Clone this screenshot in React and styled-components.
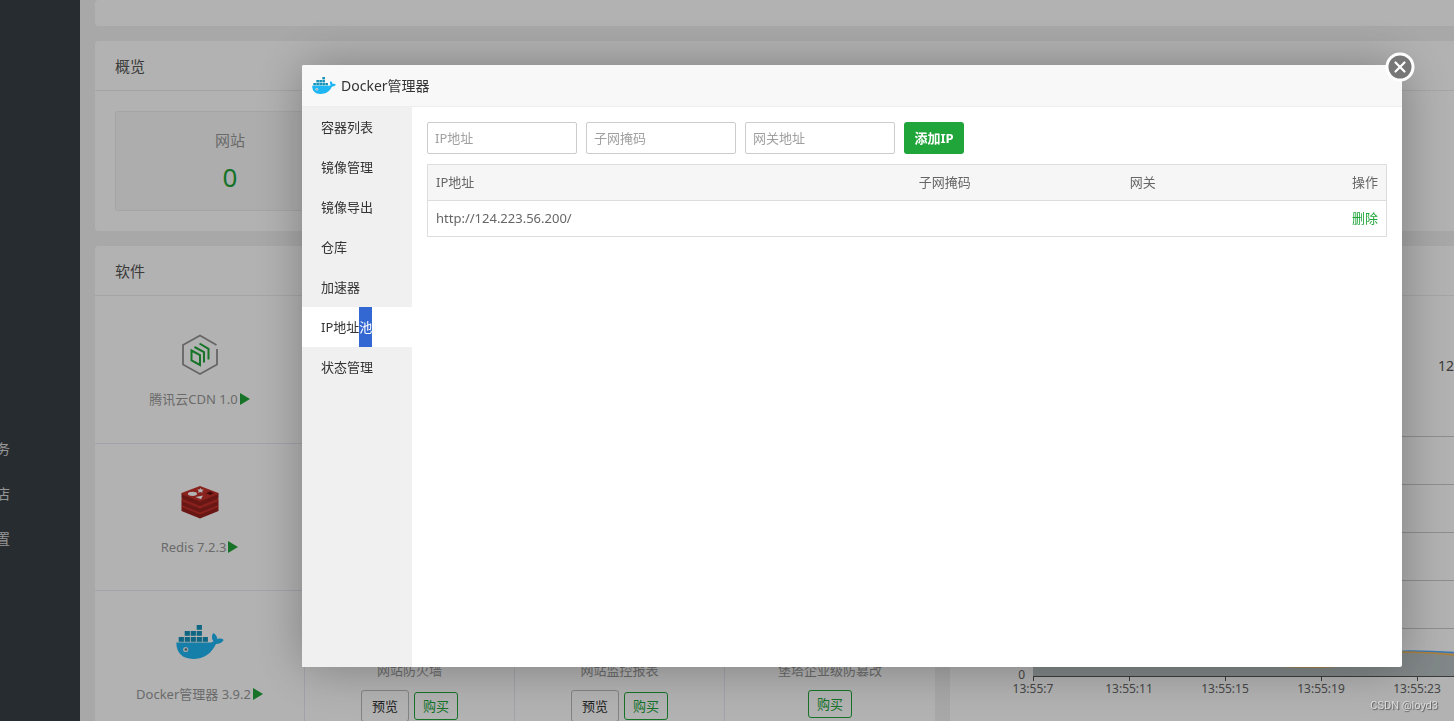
import React from "react";
import styled, { createGlobalStyle, css } from "styled-components";

const GlobalStyle = createGlobalStyle`
  *, *::before, *::after { box-sizing: border-box; }
  body {
    margin: 0;
    overflow: hidden;
    background: #f1f1f1;
    color: #666;
    font-family: "Noto Sans", "Noto Sans CJK SC", sans-serif;
    font-size: 13px;
    line-height: 20px;
  }
  button, input { font: inherit; }
  a { text-decoration: none; }
`;

const Page = styled.div`
  display: flex;
  height: 100vh;
  overflow: hidden;
`;

/* ---------- left navigation ---------- */

const SideNav = styled.nav`
  flex: none;
  width: 80px;
  overflow: hidden;
  background: #383f45;
`;

const NavList = styled.ul`
  width: 180px;
  margin: 426px 0 0 -100px;
  padding: 0;
  list-style: none;
`;

const NavItem = styled.li`
  height: 45px;
  padding-left: 54px;
  line-height: 45px;
  font-size: 14px;
`;

const NavLink = styled.a`
  color: #d6d6d6;
`;

const NAV = ["计划任务", "软件商店", "面板设置"];

/* ---------- dashboard ---------- */

const Main = styled.main`
  flex: 1;
  min-width: 0;
  display: flex;
  flex-direction: column;
  gap: 15px;
  padding-left: 15px;
`;

const Card = styled.section`
  flex: none;
  min-width: 0;
  overflow: hidden;
  background: #fff;
  border-radius: 4px 0 0 4px;
`;

const TopCard = styled(Card)`
  height: 26px;
`;

const SoftCard = styled(Card)`
  border-radius: 4px;
`;

const CardTitle = styled.h2`
  height: 50px;
  margin: 0;
  padding-left: 20px;
  border-bottom: 1px solid #ededed;
  color: #555;
  font-size: 15px;
  font-weight: 400;
  line-height: 50px;
`;

const Stats = styled.div`
  display: grid;
  grid-template-columns: repeat(auto-fill, 230px);
  padding: 20px;
`;

const StatBox = styled.div`
  height: 100px;
  padding-top: 16px;
  border: 1px solid #ededed;
  border-radius: 2px;
  background: #f8f8f8;
  text-align: center;
`;

const StatName = styled.div`
  color: #999;
  font-size: 15px;
  line-height: 24px;
`;

const StatValue = styled.a`
  display: block;
  color: #20a53a;
  font-size: 26px;
  line-height: 50px;
`;

const Columns = styled.div`
  display: grid;
  grid-template-columns: 5fr 3fr;
  gap: 15px;
`;

const SoftGrid = styled.div`
  display: grid;
  grid-template-columns: repeat(4, 1fr);
  grid-template-rows: 148px 147px 147px;
`;

const SoftCell = styled.div`
  display: flex;
  flex-direction: column;
  align-items: center;
  padding-top: ${(p) => (p.$offer ? 10 : 34)}px;
  border-right: 1px solid #e8e8f2;
  border-bottom: 1px solid #e8e8f2;
  &:nth-child(4n) { border-right: 0; }
`;

const SoftIcon = styled.div`
  width: 48px;
  height: 48px;
  margin-bottom: 11px;
  svg { display: block; }
`;

const SoftName = styled.div`
  display: flex;
  align-items: center;
  color: #999;
  line-height: 20px;
`;

const Play = styled.svg`
  margin-left: 2px;
`;

const Offers = styled.div`
  display: flex;
  align-items: center;
  gap: 5px;
  margin-top: 10px;
`;

const OfferButton = styled.button`
  padding: 0 8px;
  border: 1px solid #20a53a;
  border-radius: 3px;
  background: transparent;
  color: #20a53a;
  line-height: 26px;
  ${(p) =>
    p.$plain &&
    css`
      padding: 0 10px;
      border-color: #bbb;
      color: #333;
      line-height: 30px;
    `}
`;

const Traffic = styled.div`
  padding: 56px 0 46px 488px;
  color: #555;
  font-size: 14px;
  line-height: 28px;
  white-space: nowrap;
`;

const Chart = styled.svg`
  display: block;
  overflow: visible;
  text { fill: #666; font-size: 12px; }
`;

/* ---------- dialog ---------- */

const Shade = styled.div`
  position: fixed;
  inset: 0;
  display: flex;
  padding: 65px 52px 54px 302px;
  background: rgba(0, 0, 0, 0.3);
`;

const Dialog = styled.div`
  position: relative;
  flex: 1;
  min-width: 0;
  display: flex;
  flex-direction: column;
  border-radius: 2px;
  background: #fff;
  box-shadow: 1px 1px 50px rgba(0, 0, 0, 0.3);
`;

const DialogTitle = styled.h1`
  flex: none;
  display: flex;
  align-items: center;
  gap: 5px;
  height: 42px;
  margin: 0;
  padding-left: 10px;
  border-bottom: 1px solid #eee;
  border-radius: 2px 2px 0 0;
  background: #f8f8f8;
  color: #333;
  font-size: 14px;
  font-weight: 400;
`;

const Close = styled.button`
  position: absolute;
  top: -13px;
  right: -13px;
  width: 30px;
  height: 30px;
  padding: 0;
  border: 0;
  background: none;
  svg { display: block; }
`;

const DialogBody = styled.div`
  flex: 1;
  min-height: 0;
  display: flex;
`;

const Tabs = styled.div`
  flex: none;
  display: flex;
  flex-direction: column;
  width: 110px;
  background: #f0f0f0;
`;

const Tab = styled.button`
  height: 40px;
  padding: 0 0 0 19px;
  border: 0;
  background: ${(p) => (p.$active ? "#fff" : "transparent")};
  color: #333;
  line-height: 40px;
  text-align: left;
`;

const Marked = styled.span`
  display: inline-block;
  background: #3367d1;
  color: #fff;
`;

const Panel = styled.div`
  flex: 1;
  min-width: 0;
  padding: 15px;
`;

const Form = styled.form`
  display: flex;
  gap: 9px;
  margin-bottom: 10px;
`;

const Field = styled.input`
  width: 150px;
  height: 32px;
  padding: 0 7px;
  border: 1px solid #ccc;
  border-radius: 2px;
  background: #fff;
  color: #555;
  &::placeholder { color: #a0a0a0; opacity: 1; }
`;

const AddButton = styled.button`
  width: 60px;
  height: 32px;
  padding: 0;
  border: 0;
  border-radius: 3px;
  background: #20a53a;
  color: #fff;
  font-weight: 700;
`;

const Table = styled.table`
  width: 100%;
  border: 1px solid #ddd;
  border-collapse: collapse;
  table-layout: fixed;
  th, td {
    height: 36px;
    padding: 0 8px 2px;
    border-bottom: 1px solid #ddd;
    font-weight: 400;
    text-align: left;
  }
  th { background: #f6f6f6; }
  th:last-child, td:last-child { text-align: right; }
`;

const Col = styled.col`
  width: ${(p) => p.$w};
`;

const Action = styled.a`
  color: #20a53a;
`;

const Watermark = styled.div`
  position: fixed;
  right: 16px;
  bottom: 7px;
  color: #dcdcdc;
  font-family: Roboto, "Liberation Sans", sans-serif;
  font-size: 11px;
  line-height: 16px;
  text-shadow: 1px 1px 1px #555;
`;

/* ---------- drawings ---------- */

function Whale({ width, height }) {
  const boxes = [
    [21, 0], [9, 6], [15, 6], [21, 6],
    [3, 12], [9, 12], [15, 12], [21, 12], [27, 12],
  ];
  return (
    <svg width={width} height={height} viewBox="0 0 48 34" aria-hidden="true">
      {boxes.map(([x, y]) => (
        <rect key={`${x}-${y}`} x={x - 0.3} y={y} width="5.2" height="4.8" fill="#1592ba" />
      ))}
      <path
        d="M0.300 17.600H33.500C35.500 17.500 36.800 17 37.400 16.200C35.400 13.600 35.400 10.600 37.300 8C40 9.600 41.200 11.800 41.200 14C43.600 13.200 46 13.500 47.700 15C46.200 17.900 43.300 19 40 19C35.500 28.500 28 34 17 34C6.500 34 0.300 28 0.300 17.600Z"
        fill="#1fb6f4"
      />
      <circle cx="9.700" cy="24.500" r="2.600" fill="#e6eef2" />
      <circle cx="9.900" cy="24.500" r="1.300" fill="#5c7a88" />
    </svg>
  );
}

function CdnLogo() {
  return (
    <svg width="48" height="48" viewBox="0 0 48 48" fill="none" aria-hidden="true">
      <path d="M40.500 15L24 5.500L7 15V34.500L24 44L41 34.500V19" stroke="#939393" strokeWidth="1.800" />
      <path
        d="M15.500 20.500L24 25V35L15.500 30.500ZM18.500 17L28 22V32.500M23.500 13.500L32.500 18.800V29.500"
        stroke="#20a53a"
        strokeWidth="2"
      />
    </svg>
  );
}

function RedisLogo() {
  return (
    <svg width="48" height="48" viewBox="0 0 48 48" aria-hidden="true">
      <path d="M5.500 28.500V33L24 40.500L42.500 33V28.500Z" fill="#97211e" />
      <path d="M5.500 27L24 21L42.500 27V29L24 36.500L5.500 29Z" fill="#c4302a" />
      <path d="M5.500 22.500V27L24 34.500L42.500 27V22.500Z" fill="#97211e" />
      <path d="M5.500 21L24 15L42.500 21V23L24 30.500L5.500 23Z" fill="#c4302a" />
      <path d="M5.500 15.500V20.500L24 28L42.500 20.500V15.500Z" fill="#97211e" />
      <path d="M5.500 15L24 8L42.500 15V16L24 23.500L5.500 16Z" fill="#c4302a" />
      <ellipse cx="16.500" cy="15.800" rx="4.600" ry="2.100" fill="#fff" />
      <path d="M19.500 19L27 17.600L25 21.300ZM21.500 11.300L23.500 11.500L24.500 10L25.500 11.500L28 11.700L26.200 13L26.500 14.700L24.300 14L22 14.700L22.600 13Z" fill="#fff" />
      <path d="M30 15.300L34 13.600L38 15.300L34 17Z" fill="#5f100e" />
    </svg>
  );
}

const PlayMark = () => (
  <Play width="10" height="12" viewBox="0 0 10 12" aria-hidden="true">
    <path d="M0 0L10 6L0 12Z" fill="#20a53a" />
  </Play>
);

function Installed({ icon, name }) {
  return (
    <SoftCell>
      <SoftIcon>{icon}</SoftIcon>
      <SoftName>{name}<PlayMark /></SoftName>
    </SoftCell>
  );
}

function Offer({ name, preview }) {
  return (
    <SoftCell $offer>
      <SoftIcon />
      <SoftName>{name}</SoftName>
      <Offers>
        {preview && <OfferButton type="button" $plain>预览</OfferButton>}
        <OfferButton type="button">购买</OfferButton>
      </Offers>
    </SoftCell>
  );
}

const TIMES = ["13:55:7", "13:55:11", "13:55:15", "13:55:19", "13:55:23"];

function TrafficChart() {
  const up = "M83 225C180 225 250 239 371 239C410 239 424 225 460 225C480 225 500 226 520 228";
  const down = "M83 226C180 226 250 241 371 241C410 241 424 226 455 226C475 226 500 228 520 231";
  return (
    <Chart width="100%" height="290" role="img" aria-label="流量">
      {[10, 58, 106, 154, 202].map((y) => (
        <path key={y} d={`M83 ${y}.5H2000`} stroke="#ccc" />
      ))}
      <path d={`${up}V250H83Z`} fill="#b9c2c3" />
      <path d={up} fill="none" stroke="#52a9ff" strokeWidth="1.500" />
      <path d={down} fill="none" stroke="#f7b851" strokeWidth="1.500" />
      <path d="M83 250.500H2000" stroke="#555" />
      <text x="75" y="253" textAnchor="end">0</text>
      {TIMES.map((t, i) => (
        <g key={t}>
          <path d={`M${83 + i * 96}.5 250V255`} stroke="#555" />
          <text x={83 + i * 96} y="267" textAnchor="middle">{t}</text>
        </g>
      ))}
    </Chart>
  );
}

const TABS = ["容器列表", "镜像管理", "镜像导出", "仓库", "加速器", "IP地址池", "状态管理"];
const FIELDS = ["IP地址", "子网掩码", "网关地址"];

export default function App() {
  return (
    <>
      <GlobalStyle />
      <Page>
        <SideNav>
          <NavList>
            {NAV.map((n) => (
              <NavItem key={n}><NavLink href="#">{n}</NavLink></NavItem>
            ))}
          </NavList>
        </SideNav>
        <Main>
          <TopCard />
          <Card>
            <CardTitle>概览</CardTitle>
            <Stats>
              <StatBox>
                <StatName>网站</StatName>
                <StatValue href="#">0</StatValue>
              </StatBox>
            </Stats>
          </Card>
          <Columns>
            <SoftCard>
              <CardTitle>软件</CardTitle>
              <SoftGrid>
                <Installed icon={<CdnLogo />} name="腾讯云CDN 1.0" />
                <SoftCell /><SoftCell /><SoftCell />
                <Installed icon={<RedisLogo />} name="Redis 7.2.3" />
                <SoftCell /><SoftCell /><SoftCell />
                <Installed icon={<Whale width={48} height={34} />} name="Docker管理器 3.9.2" />
                <Offer name="网站防火墙" preview />
                <Offer name="网站监控报表" preview />
                <Offer name="堡塔企业级防篡改" />
              </SoftGrid>
            </SoftCard>
            <Card>
              <CardTitle />
              <Traffic>12</Traffic>
              <TrafficChart />
            </Card>
          </Columns>
        </Main>
      </Page>
      <Shade>
        <Dialog role="dialog" aria-labelledby="dialog-title">
          <DialogTitle id="dialog-title">
            <Whale width={24} height={17} />
            Docker管理器
          </DialogTitle>
          <DialogBody>
            <Tabs role="tablist">
              {TABS.map((t) =>
                t === "IP地址池" ? (
                  <Tab key={t} type="button" role="tab" aria-selected="true" $active>
                    IP地址<Marked>池</Marked>
                  </Tab>
                ) : (
                  <Tab key={t} type="button" role="tab" aria-selected="false">{t}</Tab>
                )
              )}
            </Tabs>
            <Panel>
              <Form onSubmit={(e) => e.preventDefault()}>
                {FIELDS.map((f) => (
                  <Field key={f} type="text" placeholder={f} aria-label={f} />
                ))}
                <AddButton type="submit">添加IP</AddButton>
              </Form>
              <Table>
                <colgroup>
                  <Col $w="50.4%" /><Col $w="22%" /><Col $w="14%" /><Col />
                </colgroup>
                <thead>
                  <tr><th>IP地址</th><th>子网掩码</th><th>网关</th><th>操作</th></tr>
                </thead>
                <tbody>
                  <tr>
                    <td>http://124.223.56.200/</td><td /><td />
                    <td><Action href="#">删除</Action></td>
                  </tr>
                </tbody>
              </Table>
            </Panel>
          </DialogBody>
          <Close type="button" aria-label="关闭">
            <svg width="30" height="30" viewBox="0 0 30 30">
              <circle cx="15" cy="15" r="13" fill="#777" stroke="#fff" strokeWidth="3" />
              <path d="M10.500 10.500L19.500 19.500M19.500 10.500L10.500 19.500" stroke="#fff" strokeWidth="2.200" strokeLinecap="round" />
            </svg>
          </Close>
        </Dialog>
      </Shade>
      <Watermark>CSDN @loyd3</Watermark>
    </>
  );
}
